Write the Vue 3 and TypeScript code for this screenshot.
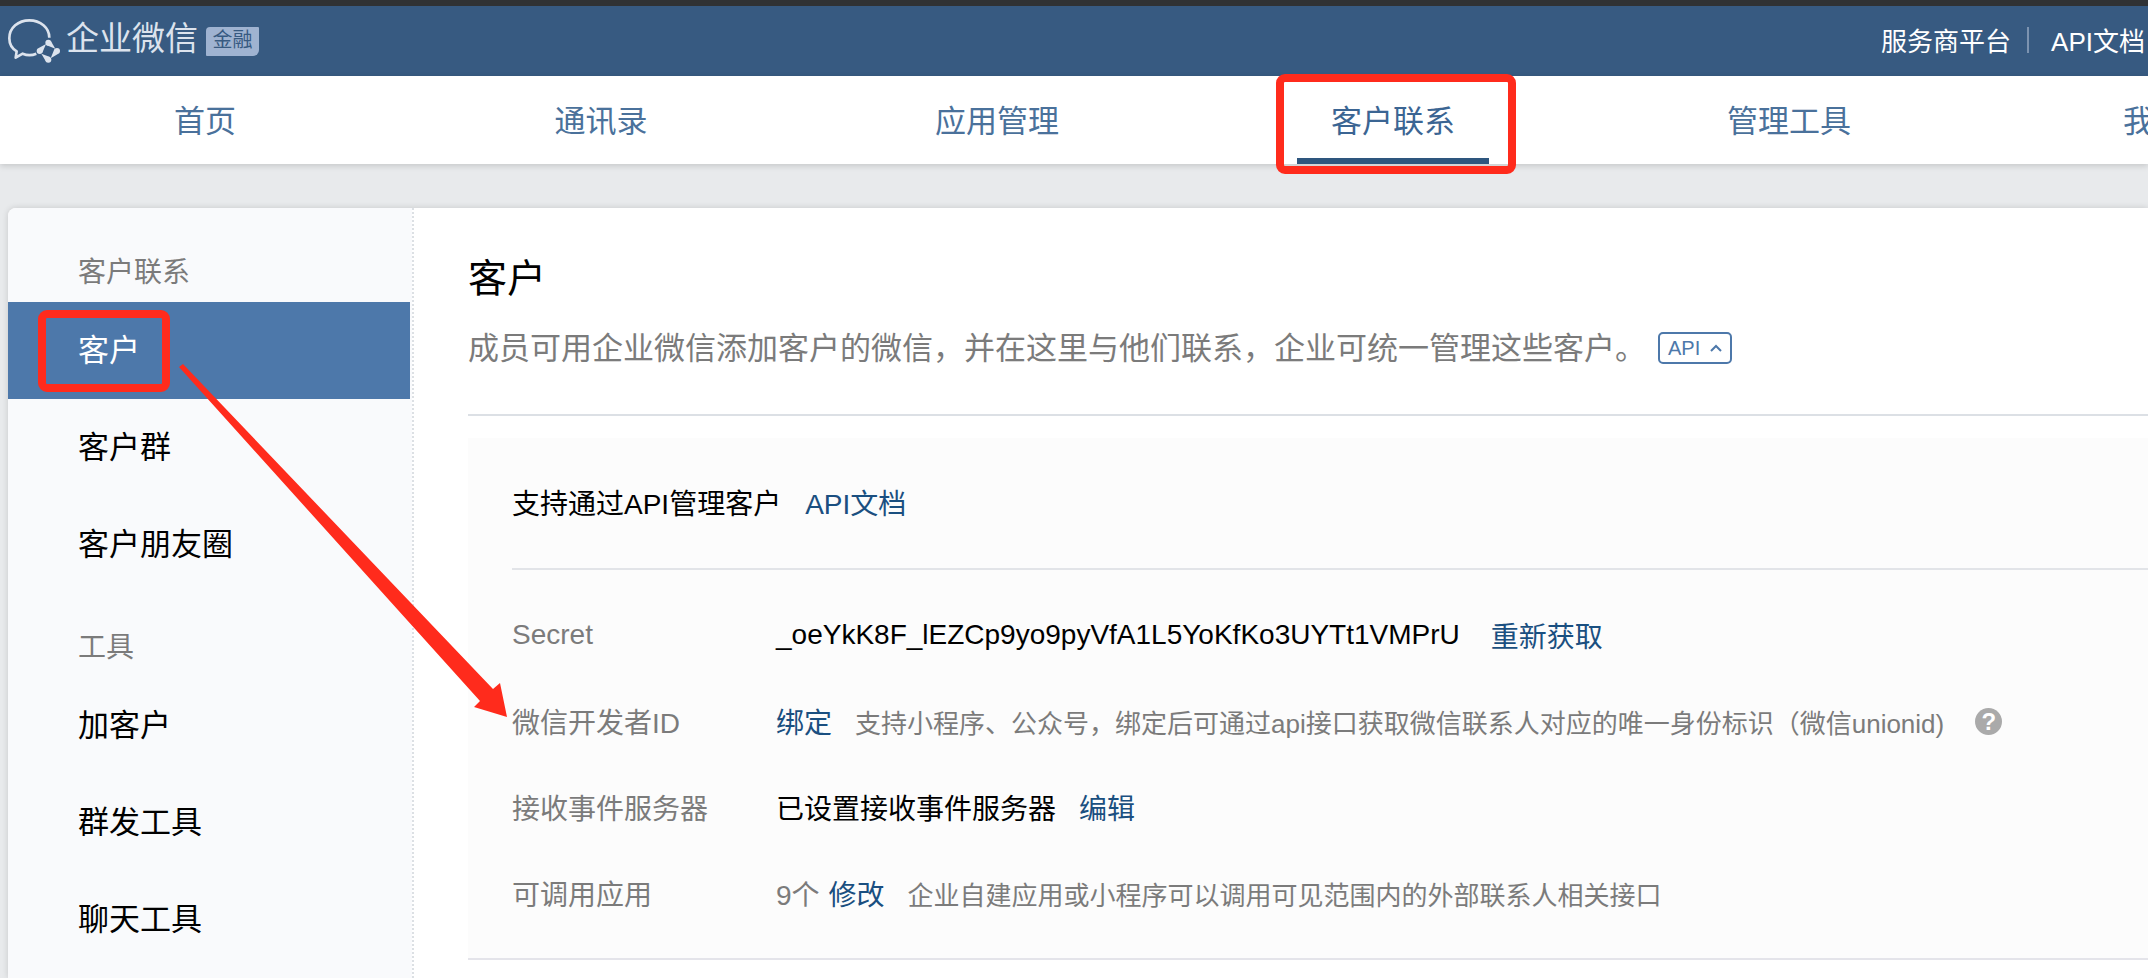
<script setup lang="ts">
interface NavItem { label: string; active?: boolean }
interface MenuGroup { title: string; items: NavItem[] }

const navItems: NavItem[] = [
  { label: '首页' },
  { label: '通讯录' },
  { label: '应用管理' },
  { label: '客户联系', active: true },
  { label: '管理工具' },
  { label: '我的企业' },
]

const menu: MenuGroup[] = [
  { title: '客户联系', items: [{ label: '客户', active: true }, { label: '客户群' }, { label: '客户朋友圈' }] },
  { title: '工具', items: [{ label: '加客户' }, { label: '群发工具' }, { label: '聊天工具' }] },
]
</script>

<template>
  <div class="page">
    <header class="topbar">
      <div class="brand">
        <svg class="brand-icon" viewBox="24 51 156 138" aria-hidden="true">
          <path d="M148 110C148 80 121 58 88 58C55 58 28 80 28 112C28 130 36 143 50 151L47 170L68 158C80 163 97 163 109 158" fill="none" stroke="currentColor" stroke-width="8" stroke-linejoin="round" />
          <g fill="currentColor">
            <circle cx="145" cy="125" r="9" />
            <circle cx="171" cy="150" r="9" />
            <circle cx="145" cy="176" r="9" />
            <circle cx="119" cy="150" r="9" />
            <path d="M153 121L166 143L140 133Z" />
            <path d="M175 158L152 172L163 145Z" />
            <path d="M137 180L124 158L150 168Z" />
            <path d="M115 142L138 129L127 155Z" />
          </g>
        </svg>
        <span class="brand-name">企业微信</span>
        <span class="brand-tag">金融</span>
      </div>
      <div class="top-links">
        <a href="#">服务商平台</a>
        <span class="separator"></span>
        <a href="#">API文档</a>
      </div>
    </header>

    <nav class="nav">
      <a v-for="item in navItems" :key="item.label" href="#" class="nav-item" :class="{ active: item.active }">
        <span class="nav-label">{{ item.label }}</span>
        <span v-if="item.active" class="highlight nav-highlight"></span>
      </a>
    </nav>

    <div class="card">
      <aside class="sidebar">
        <section v-for="group in menu" :key="group.title">
          <h2 class="group-title">{{ group.title }}</h2>
          <a v-for="item in group.items" :key="item.label" href="#" class="menu-item" :class="{ active: item.active }">
            {{ item.label }}
            <span v-if="item.active" class="highlight menu-highlight"></span>
          </a>
        </section>
      </aside>

      <main class="content">
        <div class="heading">
          <h1>客户</h1>
          <div class="description">
            <p>成员可用企业微信添加客户的微信，并在这里与他们联系，企业可统一管理这些客户。</p>
            <button type="button" class="api-button">
              API
              <svg viewBox="0 0 12 8" aria-hidden="true"><path d="M1 7L6 2L11 7" fill="none" stroke="currentColor" stroke-width="2" /></svg>
            </button>
          </div>
        </div>

        <section class="panel">
          <div class="panel-head">
            <span>支持通过API管理客户</span>
            <a href="#">API文档</a>
          </div>
          <dl class="fields">
            <div class="field">
              <dt>Secret</dt>
              <dd><span>_oeYkK8F_lEZCp9yo9pyVfA1L5YoKfKo3UYTt1VMPrU</span><a href="#" class="wide-gap">重新获取</a></dd>
            </div>
            <div class="field">
              <dt>微信开发者ID</dt>
              <dd>
                <a href="#">绑定</a>
                <span class="hint gap">支持小程序、公众号，绑定后可通过api接口获取微信联系人对应的唯一身份标识（微信unionid)</span>
                <button type="button" class="help wide-gap" aria-label="帮助">?</button>
              </dd>
            </div>
            <div class="field">
              <dt>接收事件服务器</dt>
              <dd><span>已设置接收事件服务器</span><a href="#" class="gap">编辑</a></dd>
            </div>
            <div class="field">
              <dt>可调用应用</dt>
              <dd>
                <span class="count">9个</span>
                <a href="#" class="small-gap">修改</a>
                <span class="hint gap">企业自建应用或小程序可以调用可见范围内的外部联系人相关接口</span>
              </dd>
            </div>
          </dl>
        </section>
      </main>

      <svg class="arrow" viewBox="0 0 330 356" aria-hidden="true">
        <path d="M1 3L5 0L315 325L322 319L329 353L296 343L302 337Z" fill="#ff2b1c" />
      </svg>
    </div>
  </div>
</template>

<style>
body {
  margin: 0;
}
</style>

<style scoped>
.page {
  display: flex;
  flex-direction: column;
  height: 100vh;
  overflow: hidden;
  background: #e8eaec;
  color: #000;
  font-family: "Liberation Sans", "Noto Sans CJK SC", sans-serif;
  font-size: 28px;
  white-space: nowrap;
}

a {
  color: #1a4f80;
  text-decoration: none;
}

h1, h2, p, dl, dd {
  margin: 0;
  font-weight: 400;
}

.topbar {
  display: flex;
  flex: none;
  align-items: center;
  justify-content: space-between;
  height: 70px;
  padding: 0 3px 0 8px;
  border-top: 6px solid #303234;
  background: #375a81;
}

.brand {
  display: flex;
  align-items: center;
  color: #dce3ed;
}

.brand-icon {
  width: 52px;
  height: 46px;
}

.brand-name {
  margin-left: 6px;
  padding-bottom: 4px;
  font-size: 33px;
  line-height: 44px;
}

.brand-tag {
  width: 53px;
  height: 29px;
  margin-left: 8px;
  border-radius: 4px 1px 6px 1px;
  background: #9fb3d1;
  color: #375a81;
  font-size: 20px;
  line-height: 27px;
  text-align: center;
}

.top-links {
  display: flex;
  align-items: center;
  padding-bottom: 3px;
  font-size: 26px;
}

.top-links a {
  color: #fff;
}

.separator {
  width: 2px;
  height: 26px;
  margin: 0 22px 0 16px;
  background: #7c93b0;
}

.nav {
  position: relative;
  z-index: 1;
  display: flex;
  flex: none;
  height: 88px;
  padding-left: 7px;
  background: #fff;
  box-shadow: 0 2px 6px rgba(0, 0, 0, 0.15);
}

.nav-item {
  position: relative;
  display: flex;
  flex: 0 0 396px;
  justify-content: center;
  color: #4a719b;
  font-size: 31px;
  line-height: 84px;
}

.nav-label {
  box-sizing: border-box;
  width: 192px;
  height: 88px;
  padding-top: 4px;
  text-align: center;
}

.active .nav-label {
  border-bottom: 6px solid #2e567e;
  color: #3b6593;
}

.highlight {
  position: absolute;
  box-sizing: border-box;
  border: 8px solid #ff2b1c;
  border-radius: 9px;
}

.nav-highlight {
  top: -2px;
  left: 81px;
  width: 240px;
  height: 100px;
}

.card {
  position: relative;
  display: flex;
  flex: 1;
  min-height: 0;
  margin: 44px 0 0 8px;
  border-top-left-radius: 8px;
  background: #fff;
  box-shadow: 0 0 6px rgba(0, 0, 0, 0.15);
}

.sidebar {
  box-sizing: border-box;
  flex: 0 0 406px;
  padding: 10px 4px 0 0;
  border-top-left-radius: 8px;
  background: repeating-linear-gradient(#dce0e4 0 2px, #fff 2px 4px) right / 2px 100% no-repeat, #f9fafc;
}

.group-title {
  padding: 26px 0 0 70px;
  color: #7b7b7b;
  font-size: 28px;
  line-height: 58px;
}

.menu-item {
  position: relative;
  display: block;
  padding-left: 70px;
  color: #000;
  font-size: 31px;
  line-height: 97px;
}

.menu-item.active {
  background: #4d78aa;
  color: #fff;
}

.menu-highlight {
  top: 8px;
  left: 30px;
  width: 132px;
  height: 82px;
}

.content {
  flex: 1;
  min-width: 0;
  padding-left: 54px;
}

.heading {
  padding: 40px 0 28px;
  border-bottom: 2px solid #dce0e5;
}

h1 {
  font-size: 39px;
  line-height: 62px;
}

.description {
  display: flex;
  align-items: center;
  height: 76px;
  color: #7b7b7b;
  font-size: 31px;
}

.description p {
  padding-bottom: 6px;
}

.api-button {
  display: flex;
  align-items: center;
  gap: 10px;
  box-sizing: border-box;
  height: 32px;
  margin-left: 12px;
  padding: 0 8px;
  border: 2px solid #4d78aa;
  border-radius: 5px;
  background: #fff;
  color: #4d78aa;
  font-family: inherit;
  font-size: 20px;
}

.api-button svg {
  width: 12px;
  height: 8px;
}

.panel {
  margin-top: 22px;
  padding-left: 44px;
  border-bottom: 2px solid #e4e4ea;
  background: #fcfcfc;
}

.panel-head {
  display: flex;
  gap: 24px;
  padding-top: 4px;
  border-bottom: 2px solid #e2e4e8;
  line-height: 126px;
}

.fields {
  padding: 22px 0;
}

.field {
  display: flex;
  align-items: center;
  height: 86px;
}

dt {
  flex: 0 0 264px;
  color: #7b7b7b;
}

dd {
  display: flex;
  align-items: center;
}

.small-gap {
  margin-left: 9px;
}

.gap {
  margin-left: 23px;
}

.wide-gap {
  margin-left: 31px;
}

.count,
.hint {
  color: #7b7b7b;
}

.hint {
  font-size: 26px;
}

.help {
  width: 27px;
  height: 27px;
  padding: 0;
  border: 0;
  border-radius: 50%;
  background: #aaa;
  color: #fff;
  font-family: inherit;
  font-size: 24px;
  font-weight: 700;
  line-height: 27px;
}

.arrow {
  position: absolute;
  top: 156px;
  left: 170px;
  width: 330px;
  height: 356px;
}
</style>
